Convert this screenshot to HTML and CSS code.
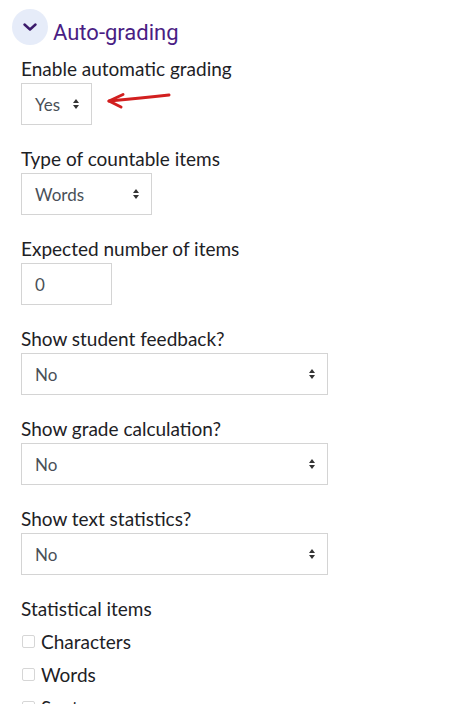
FILE: index.html
```html
<!DOCTYPE html>
<html>
<head>
<meta charset="utf-8">
<link rel="stylesheet" href="styles.css">
</head>
<body>
<div class="page">
  <div class="section-head">
    <span class="toggle">
      <svg width="14" height="8" viewBox="0 0 14 8"><path d="M1.5 1.5 L7 6.5 L12.5 1.5" fill="none" stroke="#3b1a6b" stroke-width="2.4" stroke-linecap="round" stroke-linejoin="round"/></svg>
    </span>
    <h3 class="section-title">Auto-grading</h3>
  </div>

  <div class="field">
    <div class="label">Enable automatic grading</div>
    <div class="control-row">
      <div class="select w-yes"><span>Yes</span><span class="caret"></span></div>
    </div>
    <svg class="annot-arrow" width="70" height="20" viewBox="0 0 70 20">
      <path d="M63 4 C 45 6, 25 8, 3 10" fill="none" stroke="#d21f1f" stroke-width="3" stroke-linecap="round"/>
      <path d="M17 3.5 L3 10 L15 16" fill="none" stroke="#d21f1f" stroke-width="3" stroke-linecap="round" stroke-linejoin="round"/>
    </svg>
  </div>

  <div class="field">
    <div class="label">Type of countable items</div>
    <div class="select w-words"><span>Words</span><span class="caret"></span></div>
  </div>

  <div class="field">
    <div class="label">Expected number of items</div>
    <div class="input w-num">0</div>
  </div>

  <div class="field">
    <div class="label">Show student feedback?</div>
    <div class="select w-full"><span>No</span><span class="caret"></span></div>
  </div>

  <div class="field">
    <div class="label">Show grade calculation?</div>
    <div class="select w-full"><span>No</span><span class="caret"></span></div>
  </div>

  <div class="field">
    <div class="label">Show text statistics?</div>
    <div class="select w-full"><span>No</span><span class="caret"></span></div>
  </div>

  <div class="field checks">
    <div class="label">Statistical items</div>
    <label class="check"><span class="box"></span>Characters</label>
    <label class="check"><span class="box"></span>Words</label>
    <label class="check"><span class="box"></span>Sentences</label>
  </div>
</div>
</body>
</html>
```

FILE: styles.css
```css
html, body {
  margin: 0;
  padding: 0;
  background: #ffffff;
}
body {
  font-family: Lato, "Noto Sans", sans-serif;
  color: #1d2125;
  width: 453px;
  height: 704px;
  overflow: hidden;
}
.page {
  padding: 9px 0 0 21px;
}
.section-head {
  display: flex;
  align-items: center;
  margin-left: -9px;
  height: 36px;
}
.toggle {
  width: 36px;
  height: 36px;
  border-radius: 50%;
  background: #e6ecf9;
  display: flex;
  align-items: center;
  justify-content: center;
  box-sizing: border-box;
}
.section-title {
  margin: 0 0 0 5px;
  font-family: Roboto, sans-serif;
  font-weight: 400;
  font-size: 22px;
  line-height: 28px;
  color: #4a1d84;
  padding-top: 11px;
}
.field {
  position: relative;
  margin-top: 12px;
  margin-bottom: 10px;
  height: 80px;
}
.field + .field {
  margin-top: 0;
}
.label {
  font-size: 19px;
  line-height: 24px;
  height: 26px;
}
.select, .input {
  box-sizing: border-box;
  height: 42px;
  border: 1px solid #d4d4d4;
  display: flex;
  align-items: center;
  justify-content: space-between;
  padding: 0 11px 0 13px;
  font-size: 17px;
  color: #495057;
  background: #fff;
}
.w-yes { width: 71px; }
.w-words { width: 131px; }
.w-num { width: 91px; }
.w-full { width: 307px; }
.caret {
  width: 7px;
  height: 10px;
  position: relative;
}
.caret::before, .caret::after {
  content: "";
  position: absolute;
  left: 0;
  border-left: 3.5px solid transparent;
  border-right: 3.5px solid transparent;
}
.caret::before {
  top: 0;
  border-bottom: 4px solid #333;
}
.caret::after {
  bottom: 0;
  border-top: 4px solid #333;
}
.annot-arrow {
  position: absolute;
  left: 85px;
  top: 34px;
}
.checks {
  height: auto;
}
.checks .label {
  height: 28px;
}
.check {
  display: flex;
  align-items: center;
  font-size: 19px;
  line-height: 24px;
  height: 33px;
}
.box {
  box-sizing: border-box;
  width: 13px;
  height: 13px;
  border: 1px solid #d6d6d6;
  border-radius: 2px;
  margin: 0 6px 0 1px;
  background: #fff;
}
```
